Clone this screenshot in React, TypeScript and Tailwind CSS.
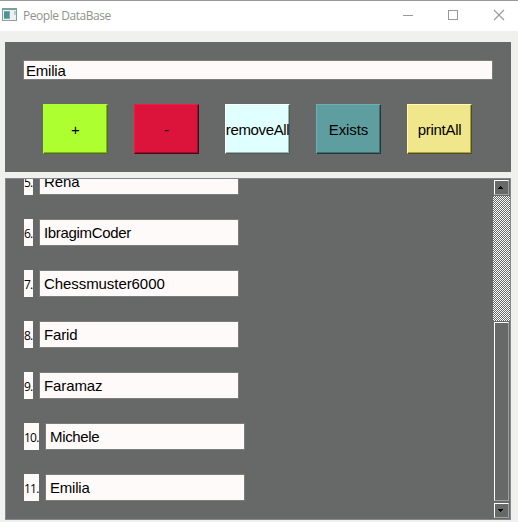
import React from "react";

const arial = "font-['Liberation_Sans',Arial,sans-serif]";
const segoe = "font-['Open_Sans','Noto_Sans',sans-serif]";

const people = [
  { n: 5, name: "Rena", spacing: "tracking-[-0.1px]" },
  { n: 6, name: "IbragimCoder", spacing: "tracking-[-0.33px]" },
  { n: 7, name: "Chessmuster6000", spacing: "tracking-[-0.07px]" },
  { n: 8, name: "Farid", spacing: "tracking-[-0.15px]" },
  { n: 9, name: "Faramaz", spacing: "tracking-[-0.1px]" },
  { n: 10, name: "Michele", spacing: "tracking-[-0.35px]" },
  { n: 11, name: "Emilia", spacing: "tracking-[-0.2px]" },
];

const buttons = [
  { label: "+", look: "tracking-normal bg-[#adff2f] border-t-[#adff2f] border-l-[#adff2f] border-r-[#566f17] border-b-[#566f17] shadow-[inset_-1px_-1px_0_#79b221]" },
  { label: "-", look: "tracking-normal bg-[#dc143c] border-t-[#f7183f] border-l-[#f7183f] border-r-[#4d0715] border-b-[#4d0715] shadow-[inset_-1px_-1px_0_#9a0e2a]" },
  { label: "removeAll", look: "tracking-[-0.37px] bg-[#e0ffff] border-t-white border-l-white border-r-[#4b5d59] border-b-[#4b5d59] shadow-[inset_-1px_-1px_0_#9cb2ab]" },
  { label: "Exists", look: "tracking-[-0.1px] bg-[#5f9ea0] border-t-[#6cb0b0] border-l-[#6cb0b0] border-r-[#213840] border-b-[#213840] shadow-[inset_-1px_-1px_0_#426e70]" },
  { label: "printAll", look: "tracking-[-0.3px] bg-[#f0e68c] border-t-[#fffcb0] border-l-[#fffcb0] border-r-[#50501f] border-b-[#50501f] shadow-[inset_-1px_-1px_0_#a8a13d]" },
];

function TitleBar() {
  return (
    <header className="flex h-[31px] shrink-0 items-center border-t border-[#999999] bg-white">
      <svg className="ml-[2px] mb-[2px] shrink-0" width="16" height="14" viewBox="0 0 16 14" shapeRendering="crispEdges">
        <rect x="0" y="0" width="15" height="13" fill="#78a09c" />
        <rect x="1" y="2" width="13" height="10" fill="#eef1ee" />
        <rect x="2" y="3" width="6" height="8" fill="#87a8aa" />
        <rect x="2" y="4" width="5" height="6" fill="#4b929b" />
        <rect x="12" y="3" width="2" height="4" fill="#b7cecb" />
        <rect x="1" y="12" width="14" height="1" fill="#8f9f9b" />
      </svg>
      <span className={`ml-[5px] text-[12px] leading-[16px] tracking-[-0.45px] text-[#8f948b] ${segoe}`}>People DataBase</span>
      <svg className="ml-auto shrink-0" width="115" height="30" viewBox="403 1 115 30" fill="none" stroke="#999999">
        <path d="M403 15.5h10" shapeRendering="crispEdges" />
        <rect x="448.5" y="10.5" width="9" height="9" shapeRendering="crispEdges" />
        <path d="M494 10l10 10M504 10l-10 10" strokeWidth="1.1" />
      </svg>
    </header>
  );
}

function ArrowButton({ down = false }: { down?: boolean }) {
  return (
    <div className="flex h-[17px] w-[17px] shrink-0 pl-px pt-px">
      <div className="flex h-[15px] w-[15px] items-center justify-center border border-b-[#a0a0a0] border-l-white border-r-[#a0a0a0] border-t-white">
        <svg width="5" height="3" viewBox="0 0 5 3" className="mb-px mr-[2px]" shapeRendering="crispEdges">
          <path fill="#000" d={down ? "M0 0h5v1h-1v1h-1v1h-1v-1h-1v-1h-1z" : "M0 3h5v-1h-1v-1h-1v-1h-1v1h-1v1h-1z"} />
        </svg>
      </div>
    </div>
  );
}

function ScrollBar() {
  return (
    <div className="flex w-[17px] shrink-0 flex-col">
      <ArrowButton />
      <div className="h-[125px] shrink-0 bg-[repeating-conic-gradient(#ffffff_0%_25%,#676968_0%_50%)] bg-[length:2px_2px]" />
      <div className="h-[181px] shrink-0 pl-px pt-px">
        <div className="h-[179px] w-[15px] border border-b-[#a0a0a0] border-l-white border-r-[#a0a0a0] border-t-white" />
      </div>
      <ArrowButton down />
    </div>
  );
}

export default function App() {
  return (
    <div className="flex h-[522px] w-[518px] flex-col overflow-hidden bg-[#f0f0ee] text-black">
      <TitleBar />
      <section className={`ml-[5px] mt-[11px] h-[130px] w-[506px] shrink-0 bg-[#676968] px-[18px] pt-[18px] ${arial}`}>
        <div className="flex h-[20px] w-[470px] items-center border border-[#7c7c7c] bg-[#fffafa] pl-[2px] text-[15px] leading-[18px] tracking-[-0.2px]">
          <span className="pt-[2px]">Emilia</span>
        </div>
        <div className="mt-6 flex gap-[26px] pl-5">
          {buttons.map((b) => (
            <button
              key={b.label}
              className={`flex h-[50px] w-[65px] items-center justify-center whitespace-nowrap border pt-[2px] text-[15px] leading-[18px] ${b.look}`}
            >
              {b.label}
            </button>
          ))}
        </div>
      </section>
      <section className="ml-[5px] mt-[6px] flex h-[342px] w-[506px] shrink-0 overflow-hidden border border-[#828790] bg-[#676968]">
        <ol className="mt-[-11px] flex flex-1 flex-col gap-6 pl-[18px]">
          {people.map((p) => (
            <li key={p.n} className="flex h-[27px] shrink-0 gap-[6px]">
              <span
                className={`flex h-[27px] items-center whitespace-nowrap bg-[#fffafa] pt-[2px] text-[12px] leading-[16px] tracking-[-0.8px] ${segoe} ${p.n > 9 ? "w-[15px]" : "w-[9px]"}`}
              >
                {p.n}.
              </span>
              <span className={`flex h-[27px] w-[200px] items-center border border-[#7c7c7c] bg-[#fffafa] pl-1 text-[15px] leading-[18px] ${arial} ${p.spacing}`}>
                {p.name}
              </span>
            </li>
          ))}
        </ol>
        <ScrollBar />
      </section>
    </div>
  );
}
